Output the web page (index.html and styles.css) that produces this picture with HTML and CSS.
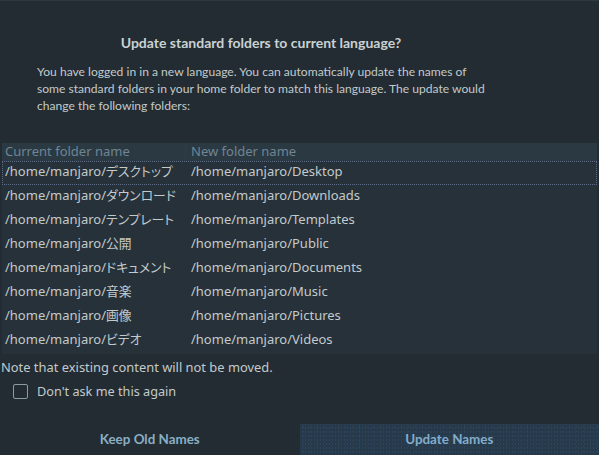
FILE: index.html
```html
<!DOCTYPE html>
<html lang="en">
<head>
<meta charset="utf-8">
<link rel="stylesheet" href="styles.css">
</head>
<body>
<div class="dialog">
  <div class="header">
    <h1 class="title">Update standard folders to current language?</h1>
    <p class="intro">You have logged in in a new language. You can automatically update the names of<br>some standard folders in your home folder to match this language. The update would<br>change the following folders:</p>
  </div>
  <div class="table">
    <div class="thead">
      <div class="th">Current folder name</div>
      <div class="th th2">New folder name</div>
    </div>
    <div class="row focus"><div class="cell">/home/manjaro/<span class="ja">デスクトップ</span></div><div class="cell c2">/home/manjaro/Desktop</div></div>
    <div class="row"><div class="cell">/home/manjaro/<span class="ja">ダウンロード</span></div><div class="cell c2">/home/manjaro/Downloads</div></div>
    <div class="row"><div class="cell">/home/manjaro/<span class="ja">テンプレート</span></div><div class="cell c2">/home/manjaro/Templates</div></div>
    <div class="row"><div class="cell">/home/manjaro/<span class="ja">公開</span></div><div class="cell c2">/home/manjaro/Public</div></div>
    <div class="row"><div class="cell">/home/manjaro/<span class="ja">ドキュメント</span></div><div class="cell c2">/home/manjaro/Documents</div></div>
    <div class="row"><div class="cell">/home/manjaro/<span class="ja">音楽</span></div><div class="cell c2">/home/manjaro/Music</div></div>
    <div class="row"><div class="cell">/home/manjaro/<span class="ja">画像</span></div><div class="cell c2">/home/manjaro/Pictures</div></div>
    <div class="row"><div class="cell">/home/manjaro/<span class="ja">ビデオ</span></div><div class="cell c2">/home/manjaro/Videos</div></div>
  </div>
  <p class="note">Note that existing content will not be moved.</p>
  <label class="check"><span class="box"></span><span class="check-label">Don't ask me this again</span></label>
  <div class="buttons">
    <div class="btn">Keep Old Names</div>
    <div class="btn btn-primary">Update Names</div>
  </div>
</div>
</body>
</html>
```
FILE: styles.css
```css
html, body {
  margin: 0;
  padding: 0;
  height: 100%;
}
body {
  background: #222c32;
  font-family: "Noto Sans", "Noto Sans CJK JP", sans-serif;
  color: #c3cacc;
  overflow: hidden;
}
.dialog {
  height: 455px;
  box-sizing: border-box;
  border-top: 1px solid #2d3941;
  display: flex;
  flex-direction: column;
}
.header {
  margin-left: 37px;
  width: 448px;
  font-family: Lato, "Noto Sans", sans-serif;
}
.title {
  margin: 32px 0 0;
  font-size: 14px;
  font-weight: bold;
  line-height: 20px;
  text-align: center;
  color: #c9d1d3;
}
.intro {
  margin: 10px 0 0;
  font-size: 12.1px;
  line-height: 17px;
  white-space: nowrap;
  color: #c3cacc;
}
.table {
  margin: 29px 2px 0 2px;
  background: #263139;
  display: flex;
  flex-direction: column;
  padding-bottom: 1px;
}
.thead {
  display: flex;
  height: 18px;
  background-color: #29363f;
  background-image: radial-gradient(circle, rgba(60,80,95,0.3) 0.6px, transparent 0.8px);
  background-size: 2px 2px;
}
.th {
  width: 184px;
  padding-left: 3px;
  font-size: 13px;
  line-height: 17px;
  color: #6f8593;
  border-right: 1px solid #2f3d47;
  box-sizing: border-box;
}
.th2 {
  width: auto;
  flex: 1;
  padding-left: 5px;
  border-right: none;
}
.row {
  display: flex;
  height: 24px;
  align-items: center;
  box-sizing: border-box;
  padding-bottom: 5px;
}
.row.focus {
  border: 1px dotted #5d6a86;
}
.cell {
  width: 184px;
  padding-left: 3px;
  font-size: 13px;
  white-space: nowrap;
  box-sizing: border-box;
  color: #c3cacc;
}
.row.focus .cell { padding-left: 2px; }
.c2 {
  width: auto;
  flex: 1;
  padding-left: 5px;
}
.row.focus .c2 { padding-left: 4px; }
.ja {
  font-family: "Noto Sans CJK JP", sans-serif;
  font-size: 12.8px;
  font-feature-settings: "palt";
}
.note {
  margin: 4px 0 0 1px;
  font-size: 12.9px;
  line-height: 18px;
}
.check {
  display: flex;
  align-items: center;
  margin: 7px 0 0 13px;
  height: 16px;
}
.box {
  width: 15px;
  height: 15px;
  box-sizing: border-box;
  border: 1.5px solid #8a9ba3;
  border-radius: 2px;
}
.check-label {
  margin-left: 9px;
  font-size: 12.7px;
}
.buttons {
  margin-top: auto;
  display: flex;
  height: 31px;
  font-family: Lato, "Noto Sans", sans-serif;
}
.btn {
  flex: 1;
  display: flex;
  align-items: center;
  justify-content: center;
  font-size: 13.4px;
  font-weight: bold;
  color: #8aaec4;
  padding-bottom: 1px;
}
.btn-primary {
  background-color: #263a4b;
  background-image:
    radial-gradient(circle, rgba(160,110,70,0.18) 0.5px, transparent 0.9px),
    radial-gradient(circle, rgba(70,110,160,0.2) 0.5px, transparent 0.9px);
  background-size: 7px 5px, 3px 4px;
  background-position: 0 0, 1px 2px;
  color: #83acca;
}
```
